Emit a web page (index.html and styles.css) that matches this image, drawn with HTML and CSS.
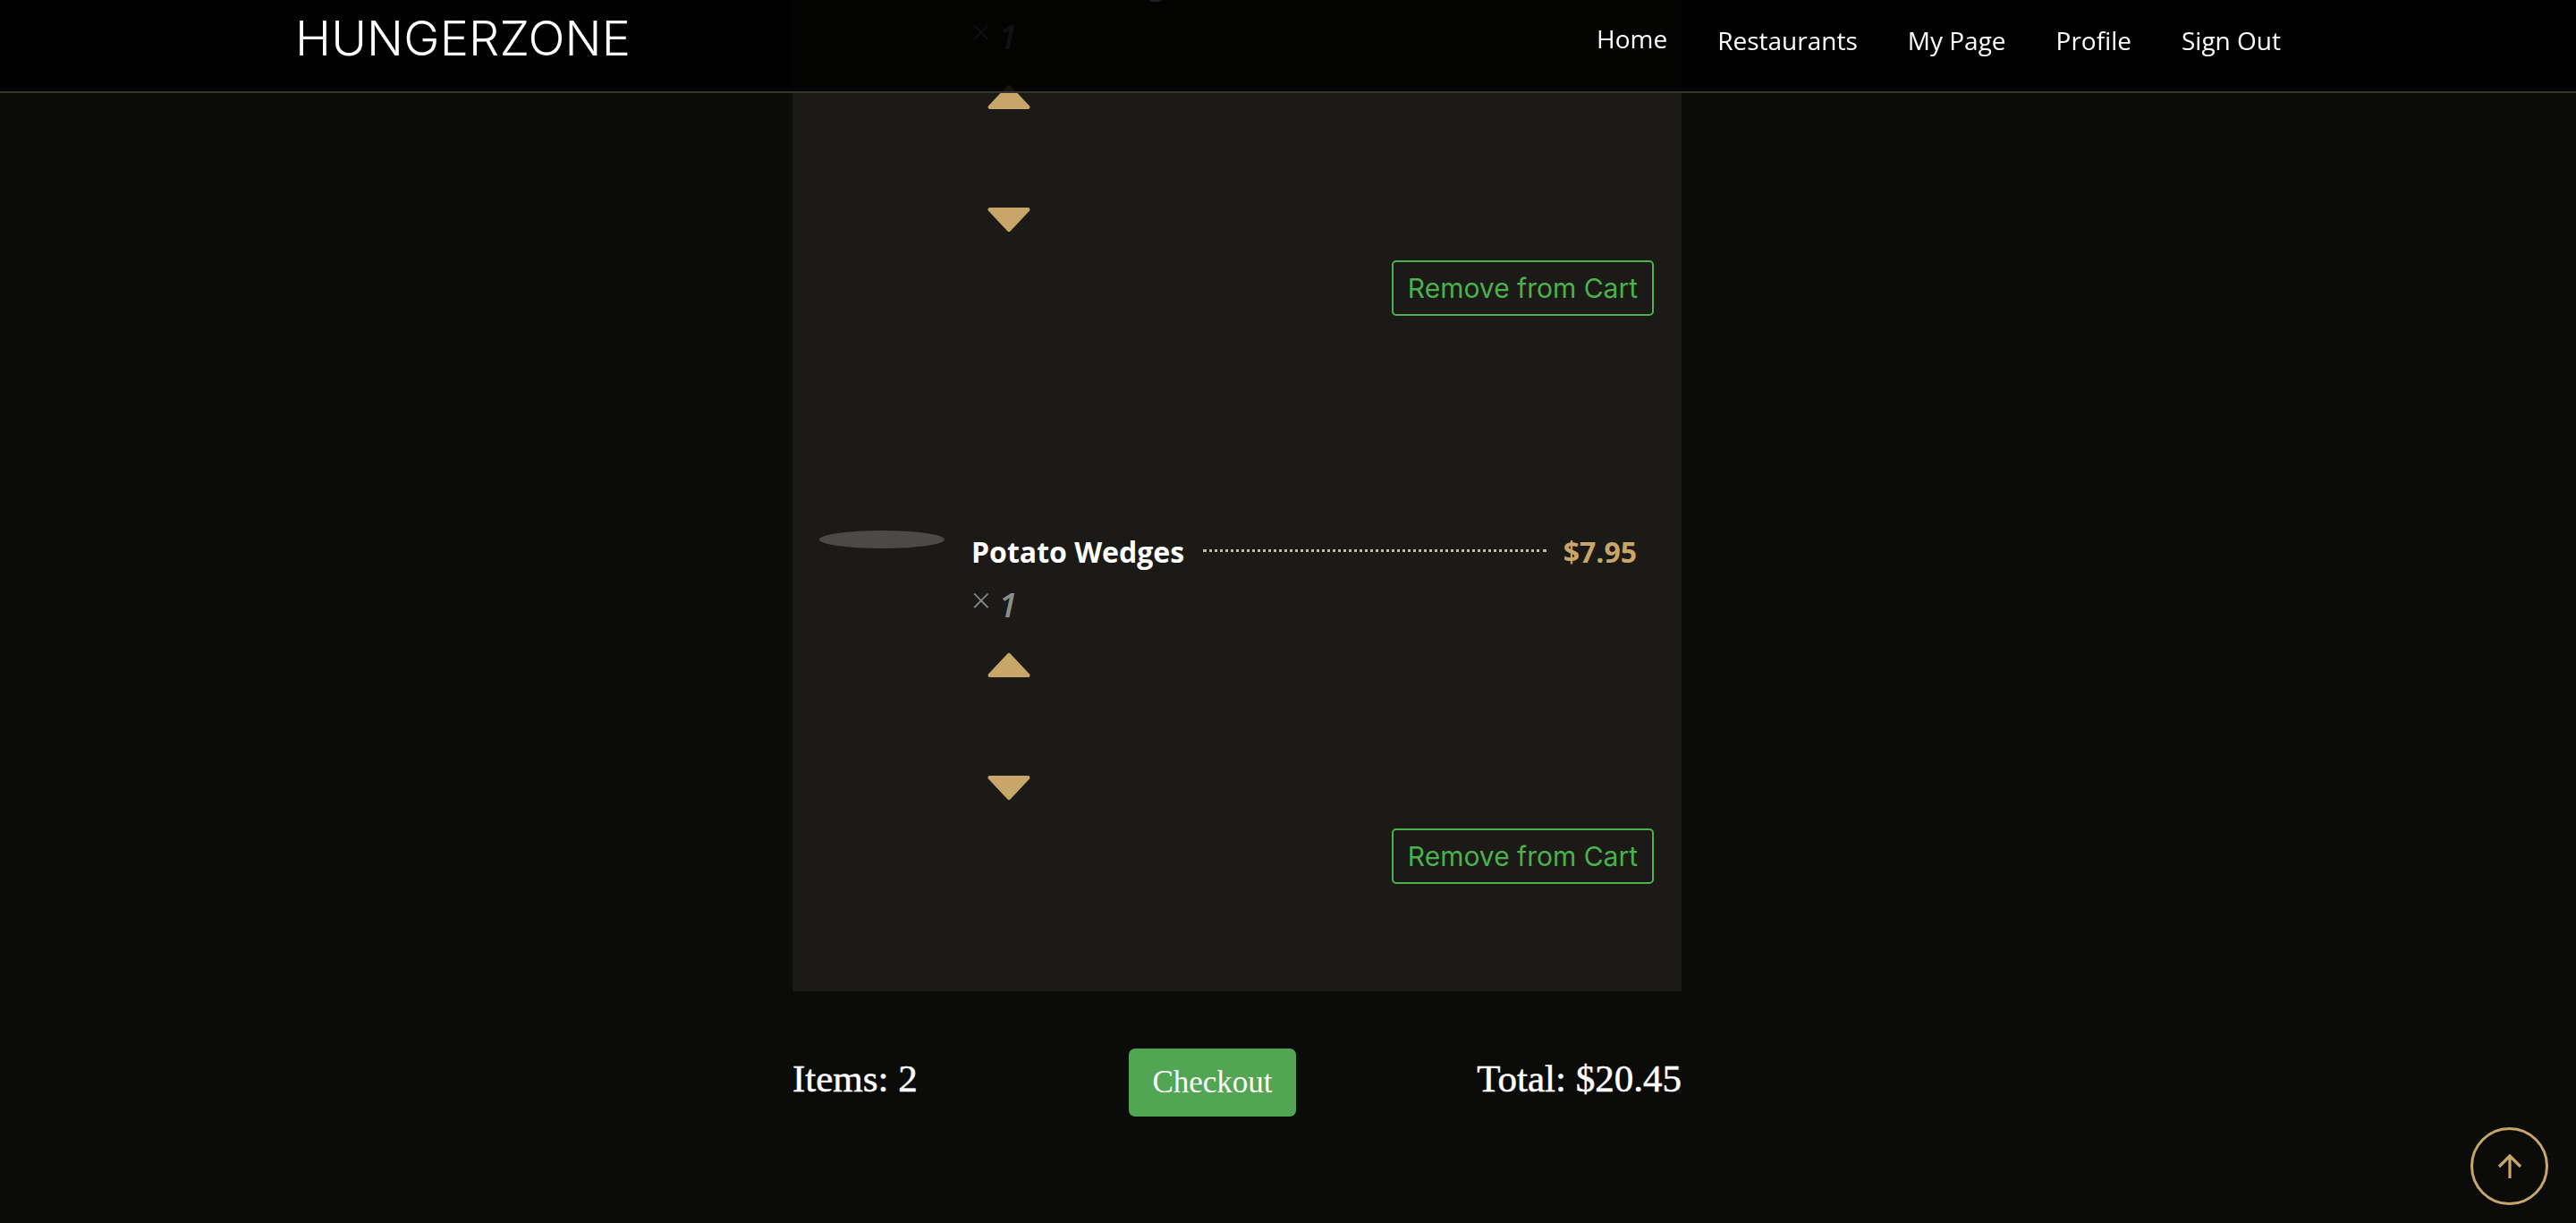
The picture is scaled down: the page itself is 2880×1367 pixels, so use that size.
FILE: index.html
```html
<!DOCTYPE html>
<html lang="en">
<head>
<meta charset="utf-8">
<title>HungerZone - Cart</title>
<link rel="stylesheet" href="styles.css">
</head>
<body>
<header class="site-header">
  <div class="header-inner">
    <a class="logo" href="#">HUNGERZONE</a>
    <nav class="nav">
      <a class="nav-link active" href="#">Home</a>
      <a class="nav-link" href="#">Restaurants</a>
      <a class="nav-link" href="#">My Page</a>
      <a class="nav-link" href="#">Profile</a>
      <a class="nav-link" href="#">Sign Out</a>
    </nav>
  </div>
</header>

<main class="cart-page">
  <section class="cart-card">
    <div class="cart-item">
      <div class="item-thumb"></div>
      <div class="item-details">
        <div class="item-title-row">
          <span class="item-name">Chicken Wings</span>
          <span class="item-dots"></span>
          <span class="item-price">$12.50</span>
        </div>
        <div class="item-qty"><span class="qty-x">×</span> <span class="qty-num">1</span></div>
        <button class="qty-btn qty-up" aria-label="Increase">
          <svg viewBox="0 0 48 28" width="48" height="28"><polygon points="24,2.2 45.2,24.8 2.8,24.8"/></svg>
        </button>
        <button class="qty-btn qty-down" aria-label="Decrease">
          <svg viewBox="0 0 48 28" width="48" height="28"><polygon points="2.8,3.2 45.2,3.2 24,25.8"/></svg>
        </button>
        <button class="remove-btn">Remove from Cart</button>
      </div>
    </div>

    <div class="cart-item">
      <div class="item-thumb"></div>
      <div class="item-details">
        <div class="item-title-row">
          <span class="item-name">Potato Wedges</span>
          <span class="item-dots"></span>
          <span class="item-price">$7.95</span>
        </div>
        <div class="item-qty"><span class="qty-x">×</span> <span class="qty-num">1</span></div>
        <button class="qty-btn qty-up" aria-label="Increase">
          <svg viewBox="0 0 48 28" width="48" height="28"><polygon points="24,2.2 45.2,24.8 2.8,24.8"/></svg>
        </button>
        <button class="qty-btn qty-down" aria-label="Decrease">
          <svg viewBox="0 0 48 28" width="48" height="28"><polygon points="2.8,3.2 45.2,3.2 24,25.8"/></svg>
        </button>
        <button class="remove-btn">Remove from Cart</button>
      </div>
    </div>
  </section>

  <div class="cart-summary">
    <span class="summary-text">Items: 2</span>
    <button class="checkout-btn">Checkout</button>
    <span class="summary-text">Total: $20.45</span>
  </div>
</main>

<button class="scroll-top" aria-label="Scroll to top">
  <svg viewBox="0 0 28 30" width="28" height="30"><path d="M14 28V3M2 15L14 3l12 12" fill="none" stroke="#c8a66a" stroke-width="3.2"/></svg>
</button>
</body>
</html>
```

FILE: styles.css
```css
* { box-sizing: border-box; }

html, body {
  margin: 0;
  padding: 0;
}

body {
  background: #0b0b0a;
  min-height: 100vh;
  font-family: "Open Sans", "Liberation Sans", sans-serif;
  color: #fff;
  overflow: hidden;
}

.site-header {
  position: fixed;
  top: 0;
  left: 0;
  right: 0;
  height: 104px;
  background: rgba(0, 0, 0, 0.88);
  border-bottom: 2px solid #37352e;
  z-index: 10;
}

.header-inner {
  width: 2220px;
  margin: 0 auto;
  display: flex;
  justify-content: space-between;
  align-items: flex-start;
}

.logo {
  margin-top: 15px;
  font-family: "Inter", "Open Sans", sans-serif;
  font-weight: 300;
  font-size: 54px;
  line-height: 55px;
  color: #fff;
  text-decoration: none;
  letter-spacing: 0.2px;
}

.nav {
  display: flex;
  gap: 56px;
  margin-top: 24px;
}

.nav-link {
  font-size: 28px;
  line-height: 42px;
  color: #fff;
  text-decoration: none;
}

.nav-link.active {
  position: relative;
  top: -2px;
}

.cart-page {
  margin-top: -162px;
  padding-bottom: 40px;
}

.cart-card {
  width: 994px;
  margin-left: calc(50% - 554px);
  background: #1b1a16;
  padding: 120px 31px 120px 30px;
  display: flex;
  flex-direction: column;
  gap: 240px;
}

.cart-item {
  display: flex;
  gap: 30px;
  align-items: flex-start;
}

.item-thumb {
  width: 140px;
  height: 20px;
  border-radius: 50%;
  background: #4b4a47;
  flex-shrink: 0;
}

.item-details {
  flex: 1;
  display: flex;
  flex-direction: column;
  align-items: flex-start;
}

.item-title-row {
  align-self: stretch;
  display: flex;
  align-items: flex-start;
  padding-right: 19px;
}

.item-name {
  font-weight: 700;
  font-size: 32px;
  line-height: 48px;
  color: #fff;
  margin-right: 21px;
}

.item-dots {
  flex: 1;
  margin-top: 21px;
  border-top: 3px dotted #bdb8a8;
  margin-right: 19px;
}

.item-price {
  font-weight: 700;
  font-size: 32px;
  line-height: 48px;
  color: #c8a66a;
}

.item-qty {
  margin-top: 9px;
  font-size: 34px;
  line-height: 51px;
  color: #8c8c8c;
  font-style: italic;
}

.qty-x {
  font-style: normal;
  font-weight: 300;
  font-size: 38px;
  position: relative;
  top: -5px;
}

.qty-num {
  font-size: 38px;
  font-weight: 600;
}

.qty-btn {
  display: block;
  background: none;
  border: 0;
  padding: 0;
  margin-left: 18px;
  line-height: 0;
  cursor: pointer;
}

.qty-btn svg {
  display: block;
}

.qty-btn polygon {
  fill: #c8a66a;
  stroke: #c8a66a;
  stroke-width: 4.5;
  stroke-linejoin: round;
}

.qty-up { margin-top: 27px; }
.qty-down { margin-top: 108px; }

.remove-btn {
  align-self: flex-end;
  margin-top: 32px;
  height: 62px;
  padding: 0 16px;
  background: transparent;
  border: 2px solid #4caf50;
  border-radius: 5px;
  color: #4caf50;
  font-family: "Inter", "Open Sans", sans-serif;
  font-size: 30px;
  cursor: pointer;
}

.cart-summary {
  width: 994px;
  margin-left: calc(50% - 554px);
  margin-top: 64px;
  display: flex;
  justify-content: space-between;
  align-items: center;
}

.summary-text {
  font-family: "Liberation Serif", "Times New Roman", serif;
  font-size: 43px;
  color: #fff;
  position: relative;
  top: -5px;
  -webkit-text-stroke: 0.5px #fff;
}

.checkout-btn {
  height: 76px;
  padding: 0 26px;
  background: #52a552;
  border: 0;
  border-radius: 7px;
  color: #fff;
  font-family: "Liberation Serif", "Times New Roman", serif;
  font-size: 35px;
  cursor: pointer;
  margin-left: 34px;
}

.scroll-top {
  position: fixed;
  right: 31px;
  bottom: 20px;
  width: 87px;
  height: 87px;
  border-radius: 50%;
  border: 3px solid #c8a66a;
  background: transparent;
  padding: 0;
  display: flex;
  align-items: center;
  justify-content: center;
  cursor: pointer;
}
```
